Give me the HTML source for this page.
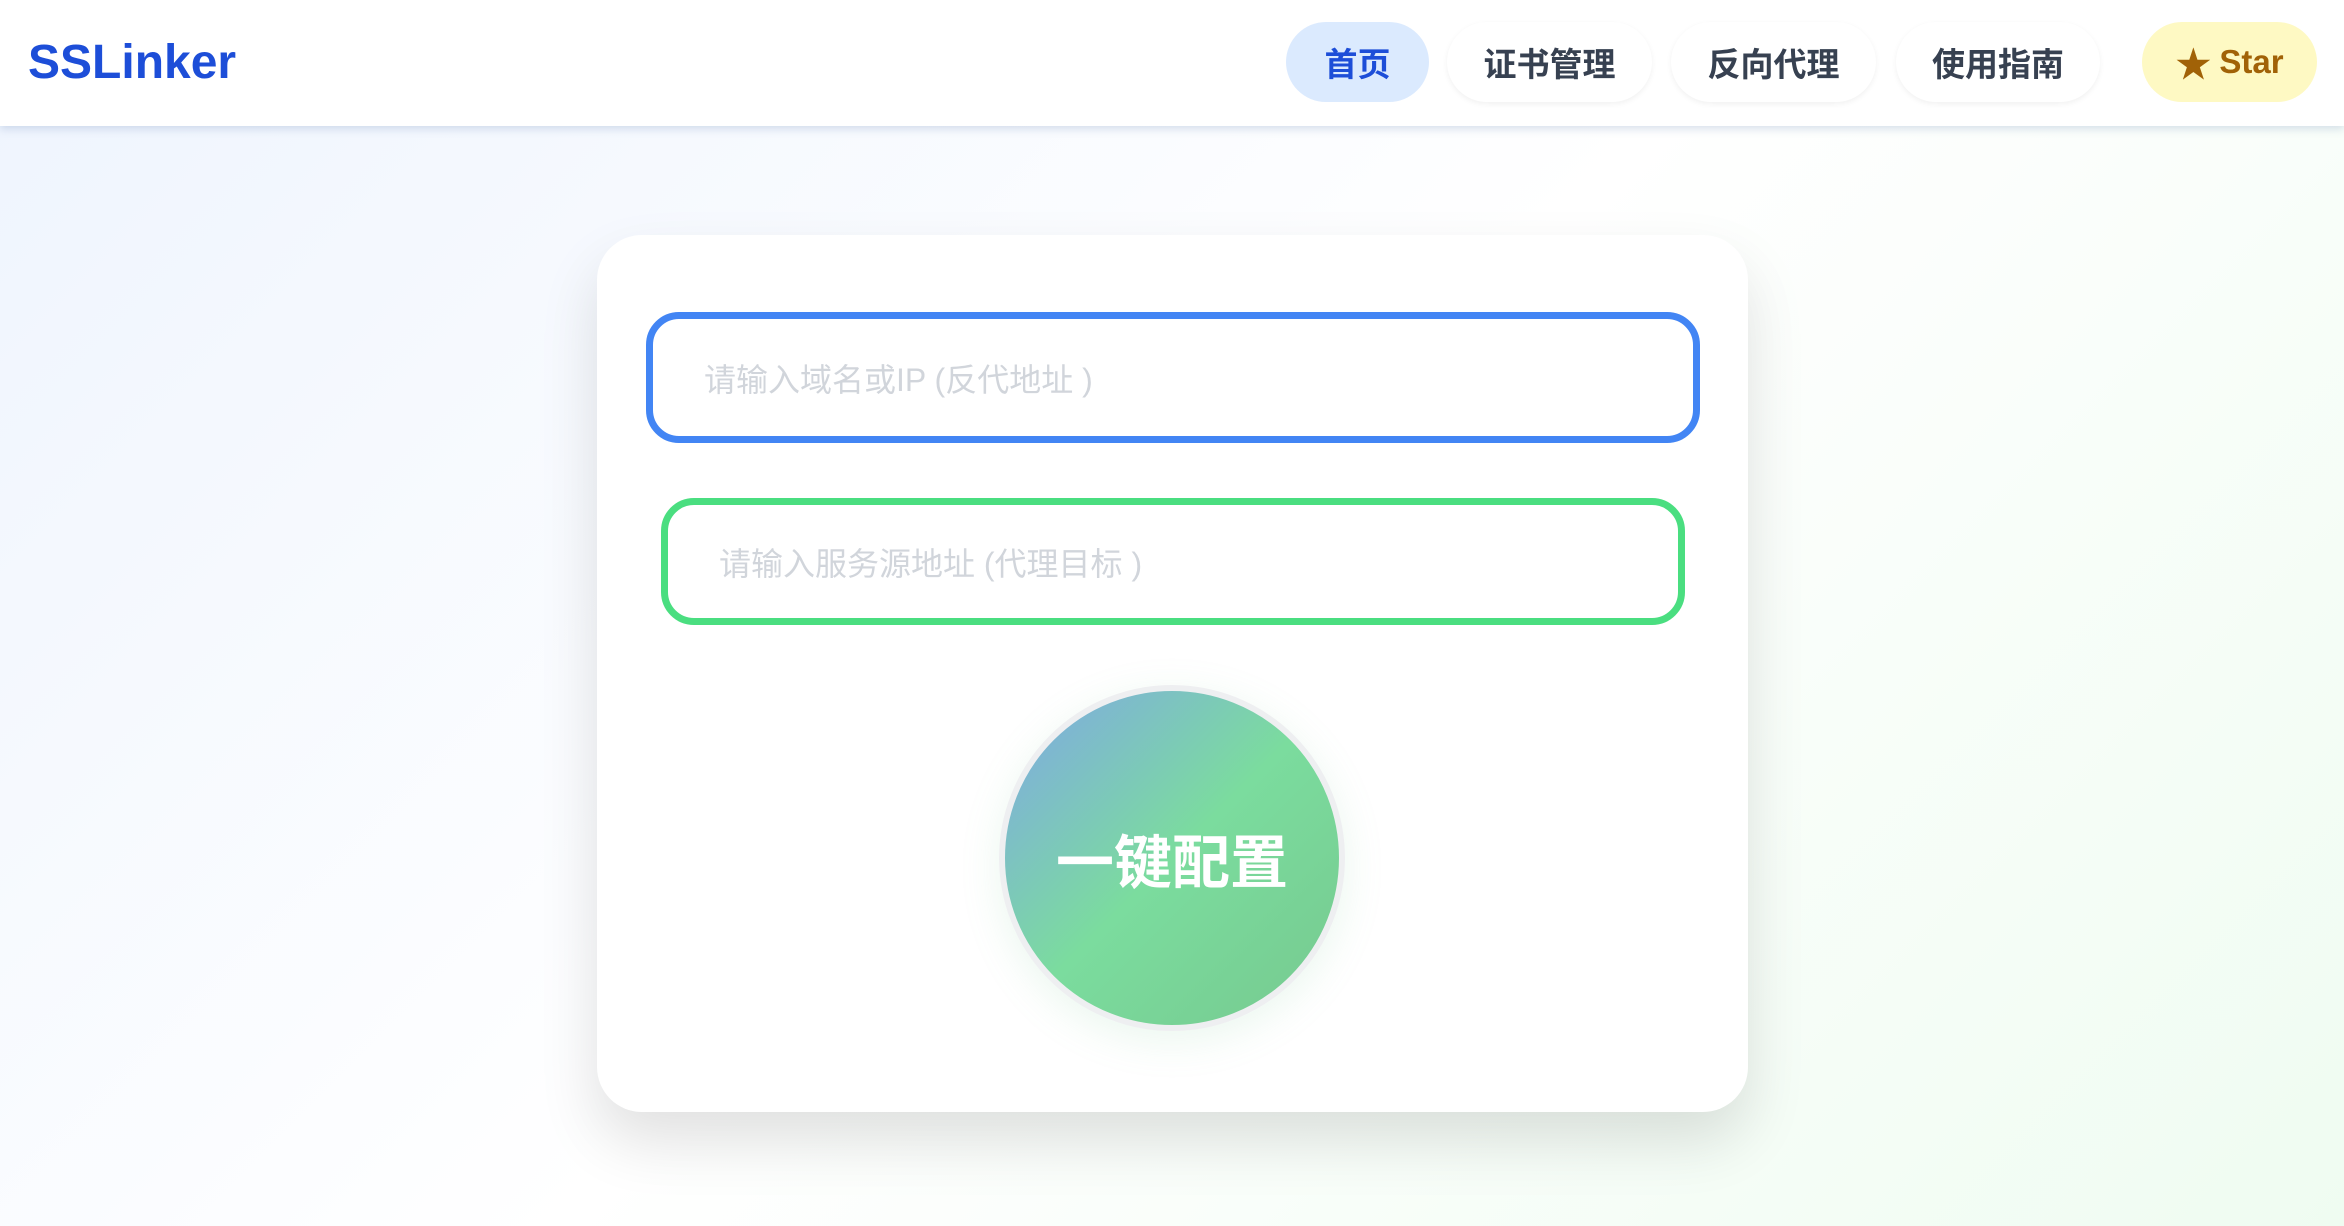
<!DOCTYPE html>
<html><head><meta charset="utf-8"><style>
*{box-sizing:border-box;margin:0;padding:0}
body{width:2344px;height:1226px;overflow:hidden;font-family:"Liberation Sans","Noto Sans CJK SC",sans-serif;background:linear-gradient(135deg,#eef4fe 0%,#ffffff 50%,#effcf1 100%);position:relative}
.hdr{position:absolute;left:0;top:0;width:2344px;height:126px;background:#fff;box-shadow:0 3px 8px rgba(100,130,180,.25)}
.logo{position:absolute;left:28px;top:30px;font-size:48px;font-weight:bold;color:#1d4ed8;line-height:66px}
.pill{position:absolute;top:22px;height:80px;border-radius:40px;font-size:33px;font-weight:bold;color:#374151;display:flex;align-items:center;justify-content:center;background:#fff;box-shadow:0 2px 6px rgba(0,0,0,.06)}
.card{position:absolute;left:597px;top:235px;width:1151px;height:877px;background:#fff;border-radius:45px;box-shadow:0 30px 60px rgba(0,0,0,.12)}
.inp{position:absolute;border-radius:33px;background:#fff;font-size:32px;color:#d1d5db;display:flex;align-items:center}
.btn{position:absolute;left:999px;top:685px;width:346px;height:346px;border-radius:50%;border:6px solid #eeeff1;background:linear-gradient(135deg,#7fa7e6 0%,#7bdc9e 50%,#76c98f 100%);display:flex;align-items:center;justify-content:center;color:#fff;font-size:58px;font-weight:bold;box-shadow:0 10px 40px rgba(120,200,150,.15)}
</style></head><body>
<div class="hdr">
<div class="logo">SSLinker</div>
<div class="pill" style="left:1286px;width:143px;background:#dbeafe;color:#1d4ed8;box-shadow:none">首页</div>
<div class="pill" style="left:1447px;width:205px">证书管理</div>
<div class="pill" style="left:1671px;width:205px">反向代理</div>
<div class="pill" style="left:1896px;width:204px">使用指南</div>
<div class="pill" style="left:2142px;width:175px;background:#fef9c3;color:#a16207;box-shadow:none"><span style="font-size:36px;margin-right:8px">★</span>Star</div>
</div>
<div class="card"></div>
<div class="inp" style="left:646px;top:312px;width:1054px;height:131px;border:7px solid #4285f4;padding-left:51px">请输入域名或IP (反代地址 )</div>
<div class="inp" style="left:661px;top:498px;width:1024px;height:127px;border:7px solid #4ade80;padding-left:51px">请输入服务源地址 (代理目标 )</div>
<div class="btn">一键配置</div>
</body></html>
